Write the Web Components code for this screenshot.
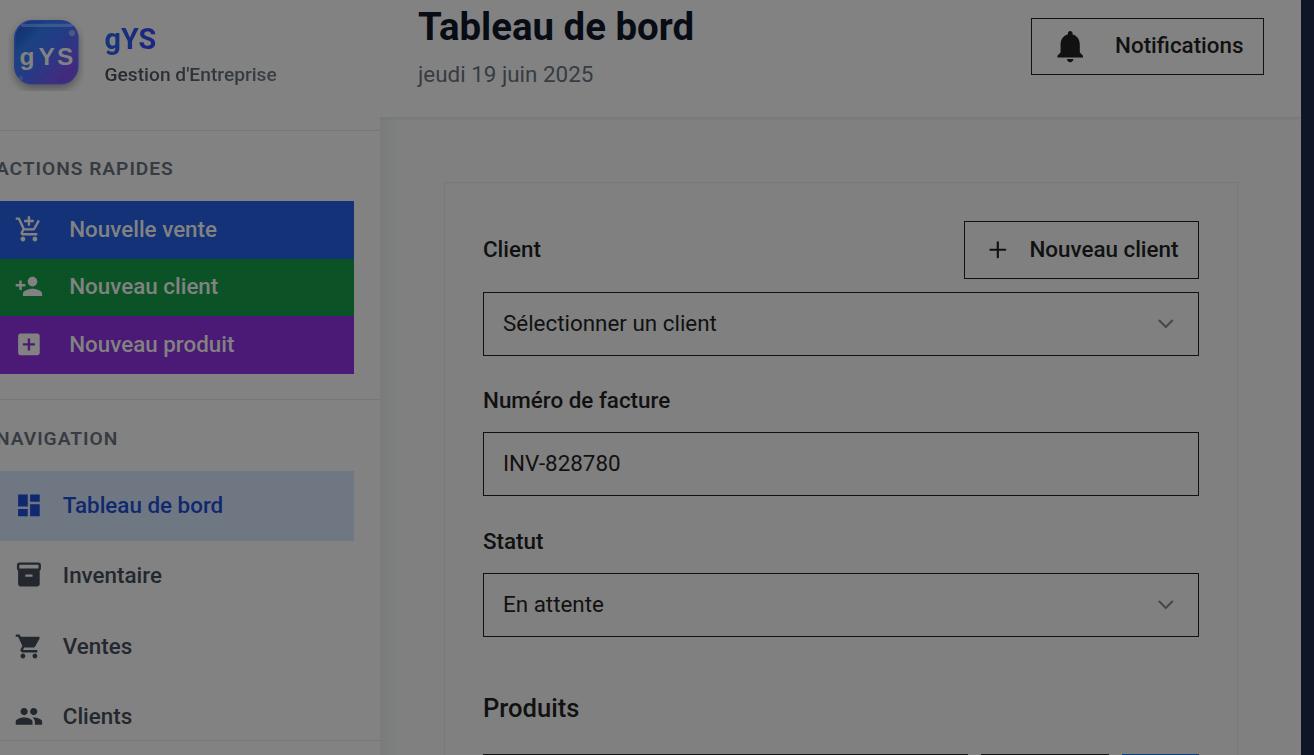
<!DOCTYPE html>
<html lang="fr">
<head>
<meta charset="utf-8">
<title>gYS</title>
<style>
html,body{margin:0;height:100%;overflow:hidden;background:#828282}
body{font-family:Roboto,"Liberation Sans",sans-serif;font-size:22.4px;font-weight:500;color:#111}
</style>
</head>
<body>
<gys-app></gys-app>
<script>
const ICONS={
cartAdd:'<path d="M11 9h2V6h3V4h-3V1h-2v3H8v2h3v3zm-4 9c-1.1 0-1.99.9-1.99 2S5.9 22 7 22s2-.9 2-2-.9-2-2-2zm10 0c-1.1 0-1.99.9-1.99 2s.89 2 1.99 2 2-.9 2-2-.9-2-2-2zm-9.83-3.25l.03-.12.9-1.63h7.45c.75 0 1.41-.41 1.75-1.03l3.86-7.01L19.42 4h-.01l-1.1 2-2.76 5H8.53l-.13-.27L6.16 6l-.95-2-.94-2H1v2h2l3.6 7.59-1.35 2.45c-.16.28-.25.61-.25.96 0 1.1.9 2 2 2h12v-2H7.42c-.13 0-.25-.11-.25-.25z"/>',
userAdd:'<path d="M15 12c2.21 0 4-1.79 4-4s-1.79-4-4-4-4 1.79-4 4 1.79 4 4 4zm-9-2V7H4v3H1v2h3v3h2v-3h3v-2H6zm9 4c-2.67 0-8 1.34-8 4v2h16v-2c0-2.66-5.33-4-8-4z"/>',
boxAdd:'<path d="M19 3H5c-1.11 0-2 .9-2 2v14c0 1.1.89 2 2 2h14c1.1 0 2-.9 2-2V5c0-1.1-.9-2-2-2zm-2 10h-4v4h-2v-4H7v-2h4V7h2v4h4v2z"/>',
dashboard:'<path d="M3 13h8V3H3v10zm0 8h8v-6H3v6zm10 0h8V11h-8v10zm0-18v6h8V3h-8z"/>',
inventory:'<path d="M20 2H4c-1 0-2 .9-2 2v3.01c0 .72.43 1.34 1 1.69V20c0 1.1 1.1 2 2 2h14c.9 0 2-.9 2-2V8.7c.57-.35 1-.97 1-1.69V4c0-1.1-1-2-2-2zm-5 12H9v-2h6v2zm5-7H4V4h16v3z"/>',
cart:'<path d="M7 18c-1.1 0-1.99.9-1.99 2S5.9 22 7 22s2-.9 2-2-.9-2-2-2zM1 2v2h2l3.6 7.59-1.35 2.45c-.16.28-.25.61-.25.96 0 1.1.9 2 2 2h12v-2H7.42c-.14 0-.25-.11-.25-.25l.03-.12.9-1.63h7.45c.75 0 1.41-.41 1.75-1.03l3.58-6.49c.08-.14.12-.31.12-.48 0-.55-.45-1-1-1H5.21l-.94-2H1zm16 16c-1.1 0-1.99.9-1.99 2s.89 2 1.99 2 2-.9 2-2-.9-2-2-2z"/>',
people:'<path d="M16 11c1.66 0 2.99-1.34 2.99-3S17.66 5 16 5c-1.66 0-3 1.34-3 3s1.34 3 3 3zm-8 0c1.66 0 2.99-1.34 2.99-3S9.66 5 8 5C6.34 5 5 6.34 5 8s1.34 3 3 3zm0 2c-2.33 0-7 1.17-7 3.5V19h14v-2.5c0-2.33-4.67-3.5-7-3.5zm8 0c-.29 0-.62.02-.97.05 1.16.84 1.97 1.97 1.97 3.45V19h6v-2.5c0-2.33-4.67-3.5-7-3.5z"/>',
bell:'<path d="M12 22c1.1 0 2-.9 2-2h-4c0 1.1.89 2 2 2zm6-6v-5c0-3.07-1.64-5.64-4.5-6.32V4c0-.83-.67-1.5-1.5-1.5s-1.5.67-1.5 1.5v.68C7.63 5.36 6 7.92 6 11v5l-2 2v1h16v-1l-2-2z"/>',
plus:'<path d="M5 12h14M12 5v14" fill="none" stroke="currentColor" stroke-width="2" stroke-linecap="round"/>',
chevron:'<path d="m6 9 6 6 6-6" fill="none" stroke="currentColor" stroke-width="2" stroke-linecap="round" stroke-linejoin="round"/>'
};
const define=(name,render)=>customElements.define(name,class extends HTMLElement{
  constructor(){super();this.attachShadow({mode:'open'});}
  connectedCallback(){this.shadowRoot.innerHTML=render(this);}
});
define('ui-icon',e=>`<style>:host{display:block;flex:none;width:var(--size,28.8px);height:var(--size,28.8px)}svg{display:block;width:100%;height:100%;fill:currentColor;overflow:visible}g{transform:translate(var(--dx,0px),0)}</style><svg viewBox="0 0 24 24"><g>${ICONS[e.getAttribute('name')]}</g></svg>`);

define('gys-logo',()=>`<style>:host{display:block;flex:none;width:76px;height:76px}svg{display:block}text{font-family:"Liberation Sans",Arial,sans-serif;font-weight:700}</style>
<svg width="76" height="76" viewBox="0 0 76 76">
<defs>
<linearGradient id="g" x1="0" y1="0" x2="1" y2="1"><stop offset="0" stop-color="#12296d"/><stop offset=".3" stop-color="#1b4282"/><stop offset=".5" stop-color="#243b84"/><stop offset=".75" stop-color="#3c2f80"/><stop offset="1" stop-color="#4a2478"/></linearGradient>
<linearGradient id="e" x1="0" y1="0" x2="1" y2="1"><stop offset="0" stop-color="#1d4387"/><stop offset="1" stop-color="#33348b"/></linearGradient>
<filter id="s" x="-20%" y="-20%" width="140%" height="150%"><feDropShadow dx="0" dy="4" stdDeviation="4" flood-color="#000" flood-opacity=".35"/></filter>
</defs>
<rect x="6.8" y="5.8" width="63" height="63" rx="17.5" fill="url(#g)" stroke="url(#e)" stroke-width="1.6" filter="url(#s)"/>
<rect x="13" y="8.8" width="52" height="3.2" rx="1.6" fill="#8494b0" opacity=".3"/>
<circle cx="64" cy="18" r="3.1" fill="#828282" opacity=".42"/><circle cx="13" cy="63" r="2.2" fill="#828282" opacity=".25"/>
<text x="11.4 30.4 49" y="50" font-size="24.5" fill="#828282">gYS</text>
</svg>`);

define('quick-action',e=>`<style>:host{display:flex;align-items:center;height:var(--h,57.6px);box-sizing:border-box;padding:0 0 var(--lift,2px) 15px;color:#828282;background:var(--bg);--dx:-.4px}span{margin-left:25.4px;line-height:32px}</style><ui-icon name="${e.getAttribute('icon')}"></ui-icon><span><slot></slot></span>`);
define('nav-item',e=>`<style>:host{display:flex;align-items:center;height:70.4px;box-sizing:border-box;padding:0 0 var(--lift,2px) 15px;color:#23282f;--dx:-.4px}:host([active]){background:#6f7782;color:#0f286f}span{margin-left:19px;line-height:32px}</style><ui-icon name="${e.getAttribute('icon')}"></ui-icon><span><slot></slot></span>`);
define('section-title',()=>`<style>:host{display:block;font-size:19.2px;font-weight:600;letter-spacing:.96px;line-height:26px;color:#373b42;white-space:nowrap;margin-left:-4px}</style><slot></slot>`);
define('app-sidebar',()=>`<style>
:host{display:flex;flex-direction:column;width:380px;height:755px;background:#828282;flex:none}
.brand{display:flex;height:130px;border-bottom:1px solid #757677;box-sizing:content-box}
.brand gys-logo{margin:15px 0 0 8px}
.names{margin:21px 0 0 20.5px}
.name{font-size:28.8px;font-weight:700;line-height:36px;width:max-content;background:linear-gradient(90deg,#14357a,#1e2480);-webkit-background-clip:text;background-clip:text;color:transparent}
.sub{font-size:19.2px;line-height:26px;margin-top:5px;width:max-content;background:linear-gradient(90deg,#24282e,#3a3e45);-webkit-background-clip:text;background-clip:text;color:transparent}
.quick{border-bottom:1px solid #757677;padding:25px 26px 0 0;box-sizing:border-box;height:269px}
.list{margin-top:19px}
.nav{height:340px;box-sizing:border-box;padding:26px 26px 0 0}
.nav nav-item:nth-child(2){--lift:3.4px}
.foot{border-top:1px solid #757677;flex:1}
</style>
<div class="brand"><gys-logo></gys-logo><div class="names"><div class="name">gYS</div><div class="sub">Gestion d'Entreprise</div></div></div>
<div class="quick"><section-title>ACTIONS RAPIDES</section-title><div class="list">
<quick-action icon="cartAdd" style="--bg:#133278;--h:58px">Nouvelle vente</quick-action>
<quick-action icon="userAdd" style="--bg:#0b5326;--h:57px;--lift:3px">Nouveau client</quick-action>
<quick-action icon="boxAdd" style="--bg:#4b1a77;--h:58px">Nouveau produit</quick-action></div></div>
<div class="nav"><section-title>NAVIGATION</section-title><div class="list">
<nav-item icon="dashboard" active>Tableau de bord</nav-item><nav-item icon="inventory">Inventaire</nav-item><nav-item icon="cart">Ventes</nav-item><nav-item icon="people">Clients</nav-item></div></div>
<div class="foot"></div>`);

define('outline-button',e=>`<style>:host{display:flex;align-items:center;box-sizing:border-box;border:1px solid #111;white-space:nowrap}span{margin-left:auto;margin-right:19.5px;line-height:32px;padding-bottom:var(--lift,2px)}ui-icon{margin-left:var(--pad,20px)}</style><ui-icon name="${e.getAttribute('icon')}"></ui-icon><span><slot></slot></span>`);
define('app-header',()=>`<style>:host{display:flex;justify-content:space-between;height:118px;box-sizing:border-box;padding:0 37px 0 38px;background:#828282;border-bottom:1px solid #797979;box-shadow:0 1px 3px rgba(0,0,0,.06);position:relative}
h1{margin:4px 0 0;font-size:38.4px;line-height:46px;font-weight:700;color:#080c15}p{margin:8px 0 0;font-size:22.4px;line-height:32px;font-weight:400;color:#373b42}
outline-button{width:233px;height:57px;margin-top:18px;--size:38.4px;--pad:19px;--lift:3px}</style>
<div><h1>Tableau de bord</h1><p>jeudi 19 juin 2025</p></div><outline-button icon="bell">Notifications</outline-button>`);
define('form-field',e=>`<style>:host{display:flex;align-items:center;justify-content:space-between;height:64px;box-sizing:border-box;border:1px solid #111;padding:0 19px 0 19px;font-weight:400}span{padding-bottom:2px}ui-icon{--size:25.6px;opacity:.5}</style><span><slot></slot></span>${e.hasAttribute('select')?'<ui-icon name="chevron"></ui-icon>':''}`);
define('invoice-form',()=>`<style>
:host{display:block;box-sizing:border-box;width:794px;height:600px;border:1px solid #777979;padding:38px 38px 0 38px;background:#808080;--size:25.6px}
.row{display:flex;justify-content:space-between;align-items:center;height:58px;margin-bottom:13px}
.row label{padding-bottom:2px}
outline-button{width:235px;height:58px}
label{display:block;height:32px;line-height:32px}
.f{margin:28px 0 16px}
h2{margin:55px 0 0;font-size:25.6px;line-height:32px;font-weight:500}
.line{display:grid;grid-template-columns:485px 128px 77px;gap:13px;margin-top:30px}
.line i{height:64px;box-sizing:border-box;border:1px solid #111}.line i:last-child{background:#074078;border:0}
</style>
<div class="row"><label>Client</label><outline-button icon="plus">Nouveau client</outline-button></div>
<form-field select>Sélectionner un client</form-field>
<label class="f">Numéro de facture</label><form-field>INV-828780</form-field>
<label class="f" style="margin-top:29px">Statut</label><form-field select>En attente</form-field>
<h2>Produits</h2><div class="line"><i></i><i></i><i></i></div>`);
define('gys-app',()=>`<style>
:host{display:flex;width:1314px;height:755px;overflow:hidden;background:#0d1527}
main{width:921px;height:755px;overflow:hidden;background:linear-gradient(90deg,#7a7c7c 0,#7c7e7e 7px,#7f8080 22px,#808080 30px)}
invoice-form{margin:64px 0 0 64px}
</style><app-sidebar></app-sidebar><main><app-header></app-header><invoice-form></invoice-form></main>`);
</script>
</body>
</html>
